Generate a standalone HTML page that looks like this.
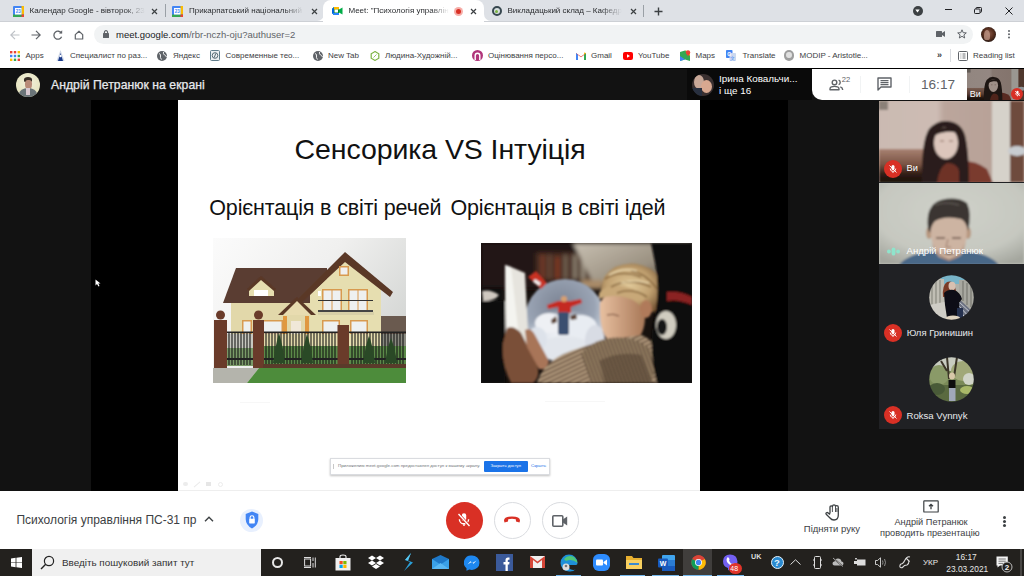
<!DOCTYPE html>
<html><head><meta charset="utf-8">
<style>
*{margin:0;padding:0;box-sizing:border-box}
html,body{width:1024px;height:576px;overflow:hidden;background:#121212;font-family:"Liberation Sans",sans-serif}
.a{position:absolute}
.t{position:absolute;white-space:nowrap;line-height:1}
.fade{overflow:hidden;-webkit-mask-image:linear-gradient(to right,#000 82%,transparent 100%)}
#tabs{left:0;top:0;width:1024px;height:21px;background:#dee1e6}
#tool{left:0;top:21px;width:1024px;height:24px;background:#fff}
#omni{left:94px;top:25px;width:879px;height:19px;border-radius:10px;background:#f1f3f4}
#bm{left:0;top:45px;width:1024px;height:23px;background:#fff}
#meet{left:0;top:68px;width:1024px;height:481px;background:#121212;border-top:1.5px solid #000}
#pres{left:91px;top:100px;width:697px;height:391px;background:#000}
#slide{left:178px;top:100px;width:522px;height:391px;background:#fff}
#tiles{left:879px;top:101px;width:145px;height:328px;background:#202124}
#hdrw{left:812px;top:69px;width:155px;height:31px;background:#fff;border-bottom-left-radius:10px}
#self{left:967px;top:68px;width:57px;height:32px;background:#8a7a70}
#bot{left:0;top:491px;width:1024px;height:58px;background:#fff}
#task{left:0;top:549px;width:1024px;height:27px;background:#23211e}
</style></head><body>

<!-- TAB BAR -->
<div class="a" id="tabs"></div>
<!-- tab1 -->
<svg class="a" style="left:13px;top:6px" width="11" height="11" viewBox="0 0 11 11"><rect x="0" y="0" width="11" height="11" rx="1" fill="#4285f4"/><rect x="0" y="8.5" width="11" height="2.5" fill="#34a853"/><rect x="8.5" y="0" width="2.5" height="8.5" fill="#fbbc04"/><rect x="8.5" y="8.5" width="2.5" height="2.5" fill="#ea4335"/><rect x="2" y="2" width="6.5" height="6.5" fill="#fff"/><text x="5.2" y="7.3" font-size="4.5" font-family="Liberation Sans" fill="#4285f4" text-anchor="middle" font-weight="bold">23</text></svg>
<div class="t fade" style="left:29.5px;top:6.5px;font-size:8px;color:#2a2c2f;width:115px">Календар Google - вівторок, 23</div>
<svg class="a" style="left:151px;top:8px" width="7" height="7" viewBox="0 0 7 7"><path d="M1 1L6 6M6 1L1 6" stroke="#3c4043" stroke-width="1.2"/></svg>
<div class="a" style="left:165px;top:4px;width:1px;height:13px;background:#9aa0a6"></div>
<!-- tab2 -->
<svg class="a" style="left:171.5px;top:6px" width="11" height="11" viewBox="0 0 11 11"><rect x="0" y="0" width="11" height="11" rx="1" fill="#4285f4"/><rect x="0" y="8.5" width="11" height="2.5" fill="#34a853"/><rect x="8.5" y="0" width="2.5" height="8.5" fill="#fbbc04"/><rect x="8.5" y="8.5" width="2.5" height="2.5" fill="#ea4335"/><rect x="2" y="2" width="6.5" height="6.5" fill="#fff"/><text x="5.2" y="7.3" font-size="4.5" font-family="Liberation Sans" fill="#4285f4" text-anchor="middle" font-weight="bold">23</text></svg>
<div class="t fade" style="left:189px;top:6.5px;font-size:8px;color:#2a2c2f;width:115px">Прикарпатський національний</div>
<div class="a" style="left:316px;top:12px;width:10px;height:10px;background:#fff"></div>
<div class="a" style="left:305px;top:0;width:18.5px;height:21.3px;background:#dee1e6;border-bottom-right-radius:7px"></div>
<svg class="a" style="left:310.5px;top:8px" width="7" height="7" viewBox="0 0 7 7"><path d="M1 1L6 6M6 1L1 6" stroke="#3c4043" stroke-width="1.2"/></svg>
<!-- active tab -->
<div class="a" style="left:323px;top:0px;width:161px;height:22px;background:#fff;border-radius:8px 8px 0 0"></div>
<svg class="a" style="left:332px;top:7px" width="11" height="8" viewBox="0 0 11 8"><path d="M0 2L2 0H7V8H2L0 6Z" fill="#00832d"/><path d="M0 2L2 0V8L0 6Z" fill="#0066da"/><path d="M2 0H7V2.5H2Z" fill="#ffba00"/><path d="M0 6H7V8H2Z" fill="#2684fc"/><rect x="2.5" y="2.5" width="3.5" height="3" fill="#fff"/><path d="M7 2.5L10.5 0.5V7.5L7 5.5Z" fill="#00ac47"/></svg>
<div class="t fade" style="left:348.5px;top:6.5px;font-size:8px;color:#2a2c2f;width:100px">Meet: "Психологія управління ПС-31</div>
<div class="a" style="left:454px;top:6.5px;width:9px;height:9px;border-radius:50%;background:#f6aea9"></div>
<div class="a" style="left:456px;top:8.5px;width:5px;height:5px;border-radius:50%;background:#d93025"></div>
<svg class="a" style="left:470px;top:8px" width="7" height="7" viewBox="0 0 7 7"><path d="M1 1L6 6M6 1L1 6" stroke="#3c4043" stroke-width="1.2"/></svg>
<!-- tab4 -->
<div class="a" style="left:481px;top:12px;width:10px;height:10px;background:#fff"></div>
<div class="a" style="left:483.5px;top:0;width:20px;height:21.3px;background:#dee1e6;border-bottom-left-radius:7px"></div>
<div class="a" style="left:491.5px;top:5.8px;width:10.5px;height:10.5px;border-radius:50%;border:2px solid #37474f;background:#d8e0e0"></div>
<div class="a" style="left:495.2px;top:9.5px;width:3px;height:3px;border-radius:50%;background:#7cb342"></div>
<div class="t fade" style="left:507.5px;top:6.5px;font-size:8px;color:#2a2c2f;width:114px">Викладацький склад – Кафедра</div>
<svg class="a" style="left:629.5px;top:8px" width="7" height="7" viewBox="0 0 7 7"><path d="M1 1L6 6M6 1L1 6" stroke="#3c4043" stroke-width="1.2"/></svg>
<div class="a" style="left:642.5px;top:5px;width:1px;height:12px;background:#9aa0a6"></div>
<svg class="a" style="left:653.5px;top:6.5px" width="9" height="9" viewBox="0 0 9 9"><path d="M4.5 0.5V8.5M0.5 4.5H8.5" stroke="#3c4043" stroke-width="1.4"/></svg>
<!-- window controls -->
<div class="a" style="left:912.5px;top:5.5px;width:10px;height:10px;border-radius:50%;background:#3c4043"></div>
<svg class="a" style="left:915px;top:8.5px" width="5" height="4" viewBox="0 0 5 4"><path d="M0.3 0.5H4.7L2.5 3.5Z" fill="#fff"/></svg>
<div class="a" style="left:944.5px;top:9px;width:7px;height:1px;background:#202124"></div>
<svg class="a" style="left:974px;top:6.5px" width="8" height="7" viewBox="0 0 8 7"><rect x="0.5" y="2" width="5.5" height="4.5" rx="0.8" fill="none" stroke="#202124" stroke-width="1"/><path d="M2 2V1.3Q2 0.5 2.8 0.5H6.7Q7.5 0.5 7.5 1.3V4.5Q7.5 5.3 6.7 5.3H6" fill="none" stroke="#202124" stroke-width="1"/></svg>
<svg class="a" style="left:1004.5px;top:6.5px" width="8" height="8" viewBox="0 0 8 8"><path d="M0.5 0.5L7.5 7.5M7.5 0.5L0.5 7.5" stroke="#202124" stroke-width="1"/></svg>

<!-- TOOLBAR -->
<div class="a" id="tool"></div>
<div class="a" style="left:0;top:20.5px;width:323px;height:1px;background:#cdd0d5"></div>
<div class="a" style="left:484px;top:20.5px;width:540px;height:1px;background:#cdd0d5"></div>
<svg class="a" style="left:10px;top:30px" width="10" height="10" viewBox="0 0 10 10"><path d="M9.5 5H1M5 0.8L0.8 5L5 9.2" fill="none" stroke="#bdc1c6" stroke-width="1.2"/></svg>
<svg class="a" style="left:31px;top:30px" width="10" height="10" viewBox="0 0 10 10"><path d="M0.5 5H9M5 0.8L9.2 5L5 9.2" fill="none" stroke="#5f6368" stroke-width="1.2"/></svg>
<svg class="a" style="left:52.5px;top:29.5px" width="10" height="10" viewBox="0 0 10 10"><path d="M8.4 3.2A4 4 0 1 0 8.6 6.8" fill="none" stroke="#5f6368" stroke-width="1.3"/><path d="M6 3.4H9.2V0.3Z" fill="#5f6368"/></svg>
<svg class="a" style="left:73.5px;top:29.5px" width="10" height="10" viewBox="0 0 10 10"><path d="M1.3 4.6L5 1.2L8.7 4.6V9H1.3Z" fill="none" stroke="#5f6368" stroke-width="1.2" stroke-linejoin="round"/></svg>
<div class="a" id="omni"></div>
<svg class="a" style="left:102.5px;top:29.5px" width="6" height="8" viewBox="0 0 6 8"><rect x="0" y="3" width="6" height="5" rx="0.6" fill="#5f6368"/><path d="M1.4 3.4V2.2A1.6 1.6 0 0 1 4.6 2.2V3.4" fill="none" stroke="#5f6368" stroke-width="1.1"/></svg>
<div class="t" style="left:116px;top:29.5px;font-size:9.5px;color:#5f6368"><span style="color:#202124">meet.google.com</span>/rbr-nczh-oju?authuser=2</div>
<svg class="a" style="left:936px;top:31px" width="9" height="6" viewBox="0 0 9 6"><rect x="0" y="0" width="6" height="6" rx="0.5" fill="#5f6368"/><path d="M6 2L9 0V6L6 4Z" fill="#5f6368"/></svg>
<svg class="a" style="left:956.5px;top:29px" width="10" height="10" viewBox="0 0 10 10"><path d="M5 0.8L6.2 3.7L9.3 3.9L6.9 5.9L7.7 9L5 7.3L2.3 9L3.1 5.9L0.7 3.9L3.8 3.7Z" fill="none" stroke="#5f6368" stroke-width="1" stroke-linejoin="round"/></svg>
<div class="a" style="left:980.5px;top:27px;width:15px;height:15px;border-radius:50%;background:radial-gradient(circle at 50% 45%,#8a5a4a 0%,#5a3020 45%,#2a1a14 75%)"></div>
<div class="a" style="left:984px;top:30px;width:6px;height:10px;border-radius:50% 50% 30% 30%;background:#c8a090;opacity:.7"></div>
<div class="a" style="left:1007.5px;top:30px;width:2.4px;height:2.4px;border-radius:50%;background:#5f6368;box-shadow:0 3.3px 0 #5f6368,0 6.6px 0 #5f6368"></div>

<!-- BOOKMARKS -->
<div class="a" id="bm"></div>
<svg class="a" style="left:10px;top:51px" width="10" height="10" viewBox="0 0 10 10">
<rect x="0" y="0" width="2.4" height="2.4" fill="#ea4335"/><rect x="3.8" y="0" width="2.4" height="2.4" fill="#ea4335"/><rect x="7.6" y="0" width="2.4" height="2.4" fill="#fbbc04"/>
<rect x="0" y="3.8" width="2.4" height="2.4" fill="#4285f4"/><rect x="3.8" y="3.8" width="2.4" height="2.4" fill="#4285f4"/><rect x="7.6" y="3.8" width="2.4" height="2.4" fill="#34a853"/>
<rect x="0" y="7.6" width="2.4" height="2.4" fill="#fbbc04"/><rect x="3.8" y="7.6" width="2.4" height="2.4" fill="#34a853"/><rect x="7.6" y="7.6" width="2.4" height="2.4" fill="#ea4335"/></svg>
<div class="t" style="left:25.5px;top:52px;font-size:8px;color:#3c4043">Apps</div>
<svg class="a" style="left:55.5px;top:50px" width="9" height="11" viewBox="0 0 9 11"><path d="M4.5 0L8.5 11H0.5Z" fill="#cfd8e8"/><path d="M4.5 3L7 11H2Z" fill="#1a3a8a"/><circle cx="4.5" cy="6" r="1.2" fill="#fff"/></svg>
<div class="t" style="left:70px;top:52px;font-size:8px;color:#3c4043">Специалист по раз...</div>
<svg class="a" style="left:157px;top:50.5px" width="10" height="10" viewBox="0 0 10 10"><circle cx="5" cy="5" r="5" fill="#5f6368"/><path d="M2 2.5Q4 3 3.5 5Q3 6.5 4.5 8.5M6.5 1Q6 3 7.5 4Q9 4.5 9.5 6" fill="none" stroke="#fff" stroke-width="0.9"/></svg>
<div class="t" style="left:173px;top:52px;font-size:8px;color:#3c4043">Яндекс</div>
<svg class="a" style="left:209.5px;top:50px" width="10" height="11" viewBox="0 0 10 11"><rect x="0.5" y="0.5" width="9" height="10" rx="1" fill="#eceff1" stroke="#607d8b" stroke-width="1"/><circle cx="5" cy="5.5" r="2.8" fill="none" stroke="#455a64" stroke-width="0.9"/><path d="M5.8 3.5L4.2 7.5" stroke="#455a64" stroke-width="0.9"/></svg>
<div class="t" style="left:225.5px;top:52px;font-size:8px;color:#3c4043">Современные тео...</div>
<svg class="a" style="left:313px;top:50.5px" width="10" height="10" viewBox="0 0 10 10"><circle cx="5" cy="5" r="5" fill="#5f6368"/><path d="M2 2.5Q4 3 3.5 5Q3 6.5 4.5 8.5M6.5 1Q6 3 7.5 4Q9 4.5 9.5 6" fill="none" stroke="#fff" stroke-width="0.9"/></svg>
<div class="t" style="left:328px;top:52px;font-size:8px;color:#3c4043">New Tab</div>
<svg class="a" style="left:369.5px;top:50.5px" width="10" height="10" viewBox="0 0 10 10"><path d="M5 0.6L8.8 2.8V7.2L5 9.4L1.2 7.2V2.8Z" fill="none" stroke="#7cb342" stroke-width="1.2"/><path d="M3.5 6.5L6.5 3.5" stroke="#7cb342" stroke-width="0.8"/></svg>
<div class="t" style="left:385px;top:52px;font-size:8px;color:#3c4043">Людина-Художній...</div>
<svg class="a" style="left:471.5px;top:50px" width="11" height="11" viewBox="0 0 11 11"><circle cx="5.5" cy="5.5" r="5.5" fill="#b0357a"/><path d="M3.2 10V5.5A2.3 2.3 0 0 1 7.8 5.5V10" fill="none" stroke="#fff" stroke-width="1.4"/></svg>
<div class="t" style="left:488px;top:52px;font-size:8px;color:#3c4043">Оцінювання персо...</div>
<svg class="a" style="left:575.5px;top:51.5px" width="10" height="8" viewBox="0 0 10 8"><path d="M0 1V8H2V3L5 5.2L8 3V8H10V1L5 4.6Z" fill="#ea4335"/><path d="M0 1V8H2V3Z" fill="#4285f4"/><path d="M8 3V8H10V1Z" fill="#34a853"/><path d="M10 1L8 2.5V0.5Z" fill="#fbbc04"/></svg>
<div class="t" style="left:591px;top:52px;font-size:8px;color:#3c4043">Gmail</div>
<svg class="a" style="left:622.5px;top:51.5px" width="10" height="8" viewBox="0 0 10 8"><rect x="0" y="0" width="10" height="8" rx="2" fill="#ff0000"/><path d="M4 2.2L7 4L4 5.8Z" fill="#fff"/></svg>
<div class="t" style="left:638px;top:52px;font-size:8px;color:#3c4043">YouTube</div>
<svg class="a" style="left:679.5px;top:50px" width="11" height="11" viewBox="0 0 11 11"><path d="M0 2L5 0.5L10 2V11L5 9.5L0 11Z" fill="#34a853"/><path d="M0 6L5 9.5L0 11Z" fill="#4285f4"/><path d="M5 0.5L10 2V6Z" fill="#fbbc04"/><circle cx="8" cy="2.5" r="2.2" fill="#ea4335"/><path d="M6.5 3.5L8 6.5L9.5 3.5Z" fill="#ea4335"/></svg>
<div class="t" style="left:695.5px;top:52px;font-size:8px;color:#3c4043">Maps</div>
<svg class="a" style="left:726px;top:50px" width="10" height="11" viewBox="0 0 10 11"><rect x="0" y="0" width="6.5" height="8" rx="0.8" fill="#4285f4"/><rect x="3.5" y="3" width="6.5" height="8" rx="0.8" fill="#cbd8f0"/><text x="3.2" y="6" font-size="5" fill="#fff" text-anchor="middle" font-family="Liberation Sans" font-weight="bold">G</text><text x="6.8" y="9.5" font-size="4.5" fill="#4285f4" text-anchor="middle" font-family="Liberation Sans">文</text></svg>
<div class="t" style="left:742.5px;top:52px;font-size:8px;color:#3c4043">Translate</div>
<div class="a" style="left:783.8px;top:50px;width:10.5px;height:10.5px;border-radius:50%;background:#9e9e9e"></div>
<div class="a" style="left:786.3px;top:51.5px;width:5.5px;height:6px;border-radius:50%;background:#e0e0e0"></div>
<div class="t" style="left:799.5px;top:52px;font-size:8px;color:#3c4043">MODIP - Aristotle...</div>
<div class="t" style="left:937px;top:51px;font-size:9px;color:#3c4043;font-weight:bold">»</div>
<div class="a" style="left:950px;top:49px;width:1px;height:13px;background:#dadce0"></div>
<svg class="a" style="left:957.5px;top:50.5px" width="10" height="10" viewBox="0 0 10 10"><rect x="0.5" y="0.5" width="9" height="9" rx="1" fill="none" stroke="#5f6368" stroke-width="1"/><path d="M2.5 3H3.3M4.5 3H7.5M2.5 5H3.3M4.5 5H7.5M2.5 7H3.3M4.5 7H7.5" stroke="#5f6368" stroke-width="0.9"/></svg>
<div class="t" style="left:973px;top:52px;font-size:8px;color:#3c4043">Reading list</div>
<div class="a" id="meet"></div>
<!-- header left -->
<div class="a" style="left:16px;top:72.5px;width:24px;height:24px;border-radius:50%;background:radial-gradient(circle at 50% 40%,#f2f0dc 0%,#e8e6c4 60%,#d8d8b0 100%);overflow:hidden">
<div class="a" style="left:8px;top:4px;width:8px;height:5px;border-radius:50% 50% 20% 20%;background:#3a3028"></div>
<div class="a" style="left:8.5px;top:7px;width:7px;height:9px;border-radius:40% 40% 50% 50%;background:#b88a78"></div>
<div class="a" style="left:3px;top:15.5px;width:18px;height:12px;border-radius:50% 50% 0 0;background:#6a7478"></div>
<div class="a" style="left:10px;top:15px;width:4px;height:7px;background:#d8c8d0"></div>
</div>
<div class="t" style="left:51px;top:78.5px;font-size:12.2px;color:#e8eaed;letter-spacing:0.05px;-webkit-text-stroke:0.25px #e8eaed">Андрій Петранюк на екрані</div>
<!-- header right: participant -->
<div class="a" style="left:687px;top:69px;width:125px;height:31px;background:#0a0a0a"></div>
<div class="a" style="left:692px;top:73.5px;width:22px;height:22px;border-radius:50%;overflow:hidden;background:#3a3030">
<div class="a" style="left:2px;top:1px;width:10px;height:14px;border-radius:50%;background:#c8a898"></div>
<div class="a" style="left:9px;top:6px;width:11px;height:13px;border-radius:50%;background:#d8a890"></div>
<div class="a" style="left:0px;top:14px;width:10px;height:10px;background:#283040"></div>
</div>
<div class="t" style="left:719px;top:74px;font-size:9.9px;color:#fff">Ірина Ковальчи...</div>
<div class="t" style="left:719px;top:86.4px;font-size:9.9px;color:#fff">і ще 16</div>
<div class="a" id="pres"></div>
<div class="a" id="slide"></div>
<div class="t" style="left:294.5px;top:135px;font-size:28.5px;color:#111;letter-spacing:-0.08px">Сенсорика VS Інтуіція</div>
<div class="t" style="left:209.3px;top:198px;font-size:21.5px;color:#111;letter-spacing:-0.16px">Орієнтація в світі речей</div>
<div class="t" style="left:450.5px;top:198px;font-size:21.5px;color:#111;letter-spacing:-0.17px">Орієнтація в світі ідей</div>
<!-- house photo -->
<svg class="a" style="left:213px;top:238px" width="193" height="145" viewBox="0 0 193 145">
<defs><linearGradient id="sky" x1="0" y1="0" x2="1" y2="0.6"><stop offset="0" stop-color="#fbfbfb"/><stop offset="0.5" stop-color="#f0f0ef"/><stop offset="1" stop-color="#d4d6d4"/></linearGradient>
<filter id="bl"><feGaussianBlur stdDeviation="0.5"/></filter></defs>
<rect width="193" height="145" fill="url(#sky)"/>
<g filter="url(#bl)">
<rect x="165" y="78" width="28" height="20" fill="#6a5a50"/>
<polygon points="23,30 114,30 114,65 10,65" fill="#5a3c30"/>
<rect x="18" y="65" width="80" height="50" fill="#e2d8aa"/>
<polygon points="97,57 132,23 168,51 168,112 97,112" fill="#e6deb0"/>
<polygon points="84,62 132,14 180,54 177,59 132,24 89,64" fill="#5a3828"/>
<polygon points="36,50 48,40 61,50 61,58 36,58" fill="#e6deb0"/>
<polygon points="34,51 48,38 63,51 61,53 48,42 36,53" fill="#5a3828"/>
<rect x="41" y="52" width="14" height="6" fill="#fff"/>
<rect x="105" y="53" width="3" height="5" fill="#fff"/>
<rect x="126" y="28" width="10" height="10" fill="#d89a50"/><rect x="127.5" y="29.5" width="7" height="7" fill="#f0f0f0"/>
<rect x="109" y="51" width="20" height="23" fill="#d89a50"/><rect x="110.5" y="52.5" width="17" height="20" fill="#eef0f0"/><rect x="118.5" y="52" width="1" height="21" fill="#d89a50"/>
<rect x="135" y="51" width="20" height="23" fill="#d89a50"/><rect x="136.5" y="52.5" width="17" height="20" fill="#eef0f0"/><rect x="144.5" y="52" width="1" height="21" fill="#d89a50"/>
<rect x="105" y="62" width="55" height="1" fill="#333"/><rect x="105" y="72" width="55" height="2" fill="#444"/>
<rect x="105" y="74" width="56" height="3" fill="#d8d0a8"/>
<polygon points="65,77 84,59 103,77" fill="#5a3828"/>
<polygon points="70,77 84,63 98,77" fill="#e8dcb0"/>
<rect x="70" y="78" width="4" height="18" fill="#e09840"/><rect x="92" y="78" width="4" height="18" fill="#e09840"/>
<rect x="78" y="83" width="10" height="13" fill="#f0e8d8"/>
<rect x="109" y="82" width="18" height="14" fill="#d89a50"/><rect x="110.5" y="83.5" width="15" height="12" fill="#eef0f0"/>
<rect x="137" y="82" width="18" height="14" fill="#d89a50"/><rect x="138.5" y="83.5" width="15" height="12" fill="#eef0f0"/>
<rect x="29" y="82" width="10" height="14" fill="#d89a50"/><rect x="30.5" y="83.5" width="7" height="12" fill="#eef0f0"/>
<rect x="48" y="82" width="22" height="14" fill="#d89a50"/><rect x="49.5" y="83.5" width="19" height="12" fill="#eef0f0"/>
<rect x="14" y="96" width="26" height="32" fill="#c8c8c0"/><rect x="168" y="96" width="25" height="16" fill="#8a8a80"/><rect x="50" y="108" width="143" height="20" fill="#5c8a48"/><rect x="14" y="110" width="26" height="18" fill="#7a9a68"/>
</g>
<g stroke="#101010" stroke-width="1.05">
<path d="M16 94V127M19 94V127M22 94V127M25 94V127M28 94V127M31 94V127M34 94V127M37 94V127M53 94V127M56 94V127M59 94V127M62 94V127M65 94V127M68 94V127M71 94V127M74 94V127M77 94V127M80 94V127M83 94V127M86 94V127M89 94V127M92 94V127M95 94V127M98 94V127M101 94V127M104 94V127M107 94V127M110 94V127M113 94V127M116 94V127M119 94V127M122 94V127M139 94V127M142 94V127M145 94V127M148 94V127M151 94V127M154 94V127M157 94V127M160 94V127M163 94V127M166 94V127M169 94V127M172 94V127M175 94V127M178 94V127M181 94V127M184 94V127M187 94V127M190 94V127"/>
</g>
<rect x="14" y="93.5" width="179" height="1.6" fill="#222"/>
<rect x="14" y="120" width="179" height="2" fill="#222"/>
<g filter="url(#bl)">
<path d="M60 125Q63 105 66 95Q70 108 72 125Z" fill="#2a4a28"/>
<path d="M88 125Q91 105 94 96Q98 108 100 125Z" fill="#2a4a28"/>
<path d="M150 125Q153 105 156 98Q160 108 162 125Z" fill="#2a4a28"/>
<path d="M172 125Q175 108 178 100Q182 110 184 125Z" fill="#2a4a28"/>
<rect x="1" y="82" width="13" height="48" fill="#6a3a2a"/><circle cx="7.5" cy="77" r="4.5" fill="#6a3a2a"/>
<rect x="40" y="82" width="11" height="48" fill="#6a3a2a"/><circle cx="45.5" cy="77" r="4.5" fill="#6a3a2a"/>
<rect x="124.5" y="87" width="11.5" height="43" fill="#6a3a2a"/>
<rect x="50" y="126" width="143" height="4" fill="#5a3a2a"/>
<polygon points="0,130 46,130 34,145 0,145" fill="#b4b4ac"/>
<polygon points="46,130 193,130 193,145 34,145" fill="#4e8c3a"/>
</g>
</svg>
<!-- child photo -->
<svg class="a" style="left:481px;top:243px" width="211" height="140" viewBox="0 0 211 140">
<defs>
<filter id="b2" x="-20%" y="-20%" width="140%" height="140%"><feGaussianBlur stdDeviation="2.2"/></filter>
<filter id="b1" x="-20%" y="-20%" width="140%" height="140%"><feGaussianBlur stdDeviation="0.8"/></filter>
<radialGradient id="glob" cx="0.45" cy="0.35" r="0.6"><stop offset="0" stop-color="#7a8292"/><stop offset="0.7" stop-color="#9aa4b4"/><stop offset="1" stop-color="#d0d8e2"/></radialGradient>
<radialGradient id="cloud" cx="0.5" cy="0.5" r="0.5"><stop offset="0" stop-color="#f2f4f8"/><stop offset="0.7" stop-color="#dfe4ec"/><stop offset="1" stop-color="#b8c0cc" stop-opacity="0"/></radialGradient>
<linearGradient id="ray" x1="0" y1="0" x2="1" y2="0.8"><stop offset="0" stop-color="#c8c0b2"/><stop offset="0.6" stop-color="#9a9080"/><stop offset="1" stop-color="#3a3028"/></linearGradient>
<radialGradient id="hair" cx="0.45" cy="0.45" r="0.6"><stop offset="0" stop-color="#e0c898"/><stop offset="0.6" stop-color="#c0a070"/><stop offset="1" stop-color="#7a5a38"/></radialGradient>
<linearGradient id="face" x1="0" y1="0" x2="1" y2="0"><stop offset="0" stop-color="#e8c0a0"/><stop offset="1" stop-color="#a87858"/></linearGradient>
<pattern id="stripe" width="4" height="4" patternUnits="userSpaceOnUse" patternTransform="rotate(-25)"><rect width="4" height="4" fill="#6e5846"/><rect width="4" height="1.8" fill="#c0a888"/></pattern>
<pattern id="stripe2" width="3.5" height="3.5" patternUnits="userSpaceOnUse" patternTransform="rotate(70)"><rect width="3.5" height="3.5" fill="#5e4c3c"/><rect width="3.5" height="1.5" fill="#a89070"/></pattern>
</defs>
<rect width="211" height="140" fill="#17110e"/>
<g filter="url(#b2)">
<rect x="0" y="0" width="120" height="46" fill="#221812"/>
<rect x="55" y="10" width="58" height="27" fill="#4a2e22"/>
<rect x="60" y="12" width="3" height="24" fill="#7a3a2a"/><rect x="67" y="12" width="3" height="24" fill="#6a4a3a"/><rect x="75" y="14" width="3" height="22" fill="#8a3a28"/><rect x="83" y="12" width="3" height="24" fill="#7a6a5a"/><rect x="92" y="12" width="4" height="24" fill="#8a8070"/><rect x="100" y="12" width="4" height="24" fill="#9a9080"/>
<polygon points="92,0 211,0 200,30 150,48 112,40" fill="url(#ray)"/>
<rect x="100" y="37" width="22" height="9" fill="#a88a68"/>
<rect x="0" y="44" width="22" height="96" fill="#0e0a08"/>
</g>
<g filter="url(#b1)">
<circle cx="84" cy="76" r="40" fill="url(#glob)"/>
<ellipse cx="84" cy="94" rx="40" ry="28" fill="url(#cloud)"/>
<ellipse cx="68" cy="80" rx="14" ry="10" fill="#eef0f4"/>
<ellipse cx="100" cy="84" rx="16" ry="12" fill="#e8ecf2"/>
<ellipse cx="84" cy="106" rx="26" ry="13" fill="#e2e6ec"/>
<ellipse cx="114" cy="98" rx="10" ry="16" fill="#d8dce4"/>
<ellipse cx="56" cy="96" rx="10" ry="12" fill="#dde2ea"/>
<path d="M1 48Q10 46 18 52Q14 58 2 58Z" fill="#cfc8c0"/>
<path d="M47 34L55 28L66 40L60 46Z" fill="#c83024"/><path d="M54 36L60 40L58 43L52 39Z" fill="#f0f0f0"/>
<path d="M66 62L77 58H90L100 56L101 60L90 64V70H77V64L67 66Z" fill="#c42a20"/>
<circle cx="83" cy="56" r="3" fill="#d8a070"/>
<rect x="77" y="69" width="11" height="23" rx="2" fill="#3a5070"/>
<path d="M70 77L75 73L76 79L71 81Z" fill="#5a4030"/><path d="M89 73L95 71L96 76L90 77Z" fill="#5a4030"/>
<path d="M24 22L30 24L44 30L48 110L40 112L25 105Z" fill="#e6e4de"/>
<path d="M24 22L30 24L40 112L25 105Z" fill="#f4f4f0"/>
<path d="M0 58H24V140H0Z" fill="#0c0908"/>
<path d="M26 85Q33 82 40 90L56 122Q60 134 52 140H30Q20 120 22 100Z" fill="#7a5038"/>
<path d="M44 87Q50 84 54 92L68 118Q66 128 58 126L46 104Z" fill="#a87458"/>
<path d="M120 52Q118 34 134 24Q152 16 170 26Q184 36 182 58Q178 70 166 70Q146 60 120 52Z" fill="url(#hair)"/>
<path d="M119 60Q122 50 138 52Q160 56 164 74Q164 92 152 100Q136 104 126 96Q118 86 119 60Z" fill="url(#face)"/>
<path d="M118 50Q126 40 146 44Q158 46 164 58L150 56Q132 50 118 56Z" fill="#c8a878"/>
<path d="M124 36Q140 26 160 34M130 44Q148 34 170 44M150 28Q165 30 176 46M136 50Q152 44 166 54" stroke="#8a6a40" stroke-width="1.6" fill="none"/><path d="M128 32Q142 24 156 28M140 40Q156 36 168 40" stroke="#f0e0b8" stroke-width="1.2" fill="none"/><ellipse cx="165" cy="66" rx="6" ry="9" fill="#b07a5a"/><path d="M126 72Q132 70 138 73" stroke="#6a4030" stroke-width="1" fill="none"/>
<path d="M56 140Q62 118 90 108Q118 98 132 96L160 92Q178 96 182 140Z" fill="url(#stripe)"/>
<path d="M100 110Q120 90 150 96Q170 100 176 120L170 140H110Z" fill="url(#stripe2)"/>
<path d="M118 118Q138 108 160 112L172 140H124Z" fill="#4a3a2c" opacity="0.45"/>
<path d="M170 0H211V140H176Q168 110 172 80Q180 50 174 20Z" fill="#0e0b0a"/>
<path d="M186 49Q200 48 211 54V62Q198 56 186 58Z" fill="#8a2420"/>
<ellipse cx="185" cy="82" rx="10" ry="14" fill="#d0ccc0"/>
<ellipse cx="181" cy="84" rx="5" ry="8" fill="#141414"/>
</g>
</svg>
<!-- faint captions -->
<div class="a" style="left:240px;top:402px;width:30px;height:1px;background:#f7f7f7"></div>
<div class="a" style="left:545px;top:401px;width:60px;height:1px;background:#f7f7f7"></div>
<!-- share notification -->
<div class="a" style="left:329.5px;top:458px;width:220px;height:16.5px;background:#fff;border:1px solid #dadce0;box-shadow:0 1px 2px rgba(0,0,0,.25)"></div>
<div class="a" style="left:333px;top:463.5px;width:1.2px;height:5px;background:#c8c8c8"></div>
<div class="t" style="left:338px;top:463.8px;font-size:4.4px;color:#707478">Приложению meet.google.com предоставлен доступ к вашему экрану.</div>
<div class="a" style="left:483.5px;top:460.5px;width:44px;height:11px;background:#1a73e8;border-radius:1px"></div>
<div class="t" style="left:490.5px;top:464px;font-size:4.2px;color:#fff">Закрыть доступ</div>
<div class="t" style="left:531px;top:464px;font-size:4.4px;color:#1a73e8">Скрыть</div>
<!-- slide toolbar faint -->
<div class="a" style="left:183px;top:482px;width:5px;height:4px;border-radius:2px;background:#ececec"></div>
<div class="a" style="left:193px;top:484px;width:8px;height:1px;background:#eaeaea;transform:rotate(-40deg)"></div>
<div class="a" style="left:206px;top:482px;width:5px;height:4px;background:#e6e6e6"></div>
<div class="a" style="left:218px;top:482px;width:5px;height:5px;border-radius:50%;border:1px solid #ececec"></div>
<div class="a" style="left:178px;top:489.5px;width:522px;height:1px;background:#eeeeee"></div>
<!-- cursor -->
<svg class="a" style="left:95px;top:279px" width="6" height="8" viewBox="0 0 6 8"><path d="M0.5 0.5V6.5L2 5L3.5 7.5L4.5 7L3.3 4.6H5.5Z" fill="#fff"/></svg>
<div class="a" id="tiles"></div>
<div class="a" id="hdrw"></div>
<svg class="a" style="left:828.5px;top:78.5px" width="15" height="12" viewBox="0 0 15 12"><circle cx="5.5" cy="3.4" r="2.3" fill="none" stroke="#5f6368" stroke-width="1.4"/><path d="M1 10.8V10Q1 7.4 5.5 7.4Q10 7.4 10 10V10.8Z" fill="none" stroke="#5f6368" stroke-width="1.4" stroke-linejoin="round"/><path d="M9.6 1.2A2.3 2.3 0 0 1 9.6 5.6" fill="none" stroke="#5f6368" stroke-width="1.4"/><path d="M11.3 7.8Q13.6 8.6 13.6 10.4V11" fill="none" stroke="#5f6368" stroke-width="1.4"/></svg>
<div class="t" style="left:841.8px;top:76.3px;font-size:7.6px;color:#5f6368">22</div>
<div class="a" style="left:860px;top:76px;width:1px;height:17px;background:#f1f3f4"></div>
<svg class="a" style="left:877px;top:77px" width="15" height="14" viewBox="0 0 15 14"><path d="M1 1H14V10H4L1 13Z" fill="none" stroke="#5f6368" stroke-width="1.4" stroke-linejoin="round"/><path d="M3.5 3.6H11.5M3.5 5.6H11.5M3.5 7.6H11.5" stroke="#5f6368" stroke-width="1.3"/></svg>
<div class="a" style="left:909px;top:76px;width:1px;height:17px;background:#f1f3f4"></div>
<div class="t" style="left:921px;top:78.3px;font-size:13.6px;color:#5f6368">16:17</div>
<!-- self view -->
<div class="a" style="left:967px;top:69px;width:57px;height:31px;overflow:hidden;background:#c4b2a8;filter:brightness(0.72)">
<svg class="a" style="left:0;top:0" width="57" height="32" viewBox="0 0 145 81" preserveAspectRatio="none"><g >
<rect width="145" height="81" fill="url(#wall1)"/>
<rect x="0" y="0" width="9" height="9" fill="#8a8078"/>
<rect x="0" y="48" width="48" height="34" fill="url(#couch)"/>
<rect x="113" y="0" width="18" height="81" fill="#d6d2ca"/>
<rect x="131" y="0" width="14" height="81" fill="#6e4c3e"/>
<ellipse cx="138" cy="50" rx="9" ry="5" fill="#c8ccd0"/>
<path d="M74 60Q96 58 108 68L114 82H70Z" fill="#7a3a2e"/>
<path d="M43 82Q42 40 50 28Q58 19 68 20Q82 21 86 34Q90 50 90 82Z" fill="#2a1e1a"/>
<ellipse cx="67" cy="42" rx="12" ry="16" fill="#dcc6bc"/>
<path d="M54 36Q58 25 70 26Q80 27 82 34Q76 30 67 31Q58 32 54 36Z" fill="#2a1e1a"/>
<path d="M58 82Q60 66 68 62Q78 62 80 70L80 82Z" fill="#6e3226"/>
<path d="M61 40H65M70 40H74" stroke="#8a6a60" stroke-width="1.2"/>
</g></svg>
</div>
<div class="t" style="left:969.8px;top:89.5px;font-size:9px;color:#fff">Ви</div>
<div class="a" style="left:1011px;top:87.5px;width:12px;height:12px;border-radius:50%;background:#d93025"></div>
<svg class="a" style="left:1013.5px;top:90px" width="7" height="7" viewBox="0 0 10 10"><path d="M3.5 4.5V2.5A1.5 1.5 0 0 1 6.5 2.5V4.5A1.5 1.5 0 0 1 3.5 4.5Z" fill="#fff"/><path d="M2.2 4.6A2.8 2.8 0 0 0 7.8 4.6M5 7.4V9M1.5 1.5L8.5 8.5" stroke="#fff" stroke-width="1.1" fill="none"/></svg>
<!-- tile 1: you -->
<div class="a" style="left:879px;top:101px;width:145px;height:81px;overflow:hidden;background:#c4b2a8">
<svg class="a" style="left:0;top:0" width="145" height="81" viewBox="0 0 145 81">
<defs><filter id="tb"><feGaussianBlur stdDeviation="1.2"/></filter>
<linearGradient id="couch" x1="0" y1="0" x2="0" y2="1"><stop offset="0" stop-color="#a88272"/><stop offset="0.45" stop-color="#7a5444"/><stop offset="0.75" stop-color="#2e1c14"/><stop offset="1" stop-color="#1a100c"/></linearGradient>
<linearGradient id="wall1" x1="0" y1="0" x2="1" y2="0"><stop offset="0" stop-color="#cbbab2"/><stop offset="0.4" stop-color="#cdbcb4"/><stop offset="0.45" stop-color="#bba69c"/><stop offset="0.78" stop-color="#b8a298"/></linearGradient></defs>
<g filter="url(#tb)">
<rect width="145" height="81" fill="url(#wall1)"/>
<rect x="0" y="0" width="9" height="9" fill="#8a8078"/>
<rect x="0" y="48" width="48" height="34" fill="url(#couch)"/>
<rect x="113" y="0" width="18" height="81" fill="#d6d2ca"/>
<rect x="131" y="0" width="14" height="81" fill="#6e4c3e"/>
<ellipse cx="138" cy="50" rx="9" ry="5" fill="#c8ccd0"/>
<path d="M74 60Q96 58 108 68L114 82H70Z" fill="#7a3a2e"/>
<path d="M43 82Q42 40 50 28Q58 19 68 20Q82 21 86 34Q90 50 90 82Z" fill="#2a1e1a"/>
<ellipse cx="67" cy="42" rx="12" ry="16" fill="#dcc6bc"/>
<path d="M54 36Q58 25 70 26Q80 27 82 34Q76 30 67 31Q58 32 54 36Z" fill="#2a1e1a"/>
<path d="M58 82Q60 66 68 62Q78 62 80 70L80 82Z" fill="#6e3226"/>
<path d="M61 40H65M70 40H74" stroke="#8a6a60" stroke-width="1.2"/>
</g>
</svg>
</div>
<div class="a" style="left:884px;top:160px;width:18px;height:18px;border-radius:50%;background:#d93025"></div>
<svg class="a" style="left:888px;top:164px" width="10" height="10" viewBox="0 0 10 10"><path d="M3.5 4.5V2.5A1.5 1.5 0 0 1 6.5 2.5V4.5A1.5 1.5 0 0 1 3.5 4.5Z" fill="#fff"/><path d="M2.2 4.6A2.8 2.8 0 0 0 7.8 4.6M5 7.4V9M1.5 1.5L8.5 8.5" stroke="#fff" stroke-width="0.9" fill="none"/></svg>
<div class="t" style="left:906.5px;top:163.5px;font-size:9.2px;color:#fff">Ви</div>
<!-- tile 2: Andriy -->
<div class="a" style="left:879px;top:183px;width:145px;height:81px;overflow:hidden;background:#c8cac2">
<svg class="a" style="left:0;top:0" width="145" height="81" viewBox="0 0 145 81">
<defs><radialGradient id="bg2" cx="0.5" cy="0.35" r="0.75"><stop offset="0" stop-color="#cfd1c9"/><stop offset="0.7" stop-color="#c6c8c0"/><stop offset="1" stop-color="#a4a69e"/></radialGradient></defs>
<g filter="url(#tb)">
<rect width="145" height="81" fill="url(#bg2)"/>
<path d="M20 82Q30 70 55 68Q70 70 85 68Q110 70 120 82Z" fill="#4a6888"/>
<ellipse cx="50" cy="50" rx="3" ry="6" fill="#b89880"/><ellipse cx="89" cy="50" rx="3" ry="6" fill="#b89880"/>
<path d="M51 40Q51 30 70 30Q88 30 88 42Q88 65 82 72Q72 80 60 74Q52 66 51 40Z" fill="#cdb4a2"/>
<path d="M53 60Q58 72 70 76Q82 72 86 60Q84 74 70 78Q56 74 53 60Z" fill="#a88a78"/>
<path d="M49 46Q46 22 62 17Q78 13 88 20Q93 30 89 48Q87 38 82 36Q66 32 56 38Q52 42 51 50Z" fill="#3a3530"/>
<path d="M56 22Q66 18 80 22" stroke="#5a5450" stroke-width="1.5" fill="none"/>
<path d="M69 56L67 64H72" stroke="#9a7a68" stroke-width="1" fill="none"/>
<path d="M57 55H66M73 55H82" stroke="#6a5448" stroke-width="1.5"/>
<path d="M64 70Q70 73 76 70" stroke="#8a6a5a" stroke-width="1"/>
</g>
</svg>
</div>
<svg class="a" style="left:887px;top:246.5px" width="13" height="9" viewBox="0 0 13 9"><circle cx="1.9" cy="4.5" r="1.9" fill="#8fe4cc"/><rect x="4.6" y="0.5" width="3.8" height="8" rx="1.9" fill="#8fe4cc"/><circle cx="11.1" cy="4.5" r="1.9" fill="#8fe4cc"/></svg>
<div class="t" style="left:906.5px;top:246px;font-size:9.6px;color:#fff">Андрій Петранюк</div>
<!-- tile 3 -->
<svg class="a" style="left:929.3px;top:275.3px" width="45" height="45" viewBox="0 0 45 45">
<defs><clipPath id="c45"><circle cx="22.5" cy="22.5" r="22.3"/></clipPath><filter id="ab"><feGaussianBlur stdDeviation="0.7"/></filter></defs>
<g clip-path="url(#c45)"><g filter="url(#ab)">
<rect width="45" height="45" fill="#b0b0a8"/>
<rect x="12" y="0" width="24" height="9" fill="#78b4c8"/>
<rect x="0" y="4" width="15" height="30" fill="#c0beb4"/>
<path d="M3 8V30M7 6V30M11 5V28" stroke="#8a8a80" stroke-width="1.2"/>
<rect x="30" y="5" width="15" height="28" fill="#a8a8a0"/>
<path d="M34 6V26M38 8V30M42 10V32" stroke="#7a7a72" stroke-width="1.2"/>
<path d="M0 30L20 26L24 45H0Z" fill="#cfcdc6"/>
<path d="M28 22L45 38V45H30Z" fill="#6a7080"/>
<path d="M29 26L44 40M30 31L42 44M31 36L38 45" stroke="#c8ccd4" stroke-width="1"/>
<path d="M14 22Q13 10 18 7Q24 5 26 12L28 20Z" fill="#7a3a28"/>
<ellipse cx="23" cy="11" rx="3.5" ry="4.2" fill="#d8c0b0"/>
<path d="M15 18Q19 14 25 15Q31 17 33 24L30 28L31 42Q24 45 18 43L16 30Z" fill="#101012"/>
<rect x="28" y="33" width="6" height="12" fill="#283050"/>
<ellipse cx="24" cy="43" rx="7" ry="2.5" fill="#e0d4c0"/>
</g></g></svg>
<div class="a" style="left:884px;top:323.5px;width:18px;height:18px;border-radius:50%;background:#d93025"></div>
<svg class="a" style="left:888px;top:327.5px" width="10" height="10" viewBox="0 0 10 10"><path d="M3.5 4.5V2.5A1.5 1.5 0 0 1 6.5 2.5V4.5A1.5 1.5 0 0 1 3.5 4.5Z" fill="#fff"/><path d="M2.2 4.6A2.8 2.8 0 0 0 7.8 4.6M5 7.4V9M1.5 1.5L8.5 8.5" stroke="#fff" stroke-width="0.9" fill="none"/></svg>
<div class="t" style="left:906.7px;top:328px;font-size:9.5px;color:#e8eaed">Юля Гринишин</div>
<!-- tile 4 -->
<svg class="a" style="left:929.3px;top:357.3px" width="45" height="45" viewBox="0 0 45 45">
<g clip-path="url(#c45)"><g filter="url(#ab)">
<rect width="45" height="45" fill="#7a8a58"/>
<rect x="0" y="0" width="45" height="14" fill="#c8ccc0"/>
<ellipse cx="10" cy="18" rx="10" ry="10" fill="#8a9a68"/>
<ellipse cx="34" cy="14" rx="12" ry="10" fill="#a0a878"/>
<ellipse cx="40" cy="22" rx="6" ry="6" fill="#d0d4c8"/>
<path d="M18 0L20 22M28 0L25 20M12 4L18 14" stroke="#3a3428" stroke-width="2"/>
<rect x="0" y="28" width="45" height="17" fill="#5a6a40"/>
<ellipse cx="38" cy="33" rx="7" ry="4" fill="#a8b868"/>
<ellipse cx="8" cy="32" rx="8" ry="6" fill="#4a5a38"/>
<ellipse cx="23" cy="19" rx="3" ry="3.5" fill="#d8c8a8"/>
<rect x="19.5" y="23" width="7" height="8" fill="#111"/>
<rect x="20" y="31" width="6.5" height="13" fill="#a0a8b8"/>
</g></g></svg>
<div class="a" style="left:884px;top:406px;width:18px;height:18px;border-radius:50%;background:#d93025"></div>
<svg class="a" style="left:888px;top:410px" width="10" height="10" viewBox="0 0 10 10"><path d="M3.5 4.5V2.5A1.5 1.5 0 0 1 6.5 2.5V4.5A1.5 1.5 0 0 1 3.5 4.5Z" fill="#fff"/><path d="M2.2 4.6A2.8 2.8 0 0 0 7.8 4.6M5 7.4V9M1.5 1.5L8.5 8.5" stroke="#fff" stroke-width="0.9" fill="none"/></svg>
<div class="t" style="left:906.5px;top:410.5px;font-size:9.6px;color:#e8eaed">Roksa Vynnyk</div>
<div class="a" id="bot"></div>
<div class="t" style="left:16.4px;top:513.6px;font-size:12px;color:#3c4043">Психологія управління ПС-31 пр</div>
<svg class="a" style="left:204px;top:516px" width="10" height="6" viewBox="0 0 10 6"><path d="M1 5.2L5 1.2L9 5.2" fill="none" stroke="#3c4043" stroke-width="1.4"/></svg>
<div class="a" style="left:240px;top:508.5px;width:23px;height:23px;border-radius:50%;background:#e8f0fe"></div>
<svg class="a" style="left:244.5px;top:510.5px" width="14" height="18" viewBox="0 0 14 18"><path d="M7 0.5L13.3 3V8Q13.3 14 7 17.5Q0.7 14 0.7 8V3Z" fill="#4285f4"/><rect x="4.2" y="7.8" width="5.6" height="4.6" rx="0.6" fill="#fff"/><path d="M5.1 8V6.6A1.9 1.9 0 0 1 8.9 6.6V8" fill="none" stroke="#fff" stroke-width="1.1"/></svg>
<!-- mic off -->
<div class="a" style="left:445.5px;top:502px;width:37px;height:37px;border-radius:50%;background:#d93025"></div>
<svg class="a" style="left:455px;top:511px" width="18" height="18" viewBox="0 0 18 18"><path d="M6.8 8V4.5A2.2 2.2 0 0 1 11.2 4.5V8A2.2 2.2 0 0 1 6.8 8Z" fill="#fff"/><path d="M4.4 8.2A4.6 4.6 0 0 0 13.6 8.2M9 12.8V15" fill="none" stroke="#fff" stroke-width="1.4"/><path d="M3.5 3L14.5 15" stroke="#d93025" stroke-width="2.6"/><path d="M3.5 3L14.5 15" stroke="#fff" stroke-width="1.4"/></svg>
<!-- hangup -->
<div class="a" style="left:493.5px;top:502px;width:37px;height:37px;border-radius:50%;border:1px solid #dadce0;background:#fff"></div>
<svg class="a" style="left:503px;top:515px" width="18" height="9" viewBox="0 0 18 9"><path d="M1 5.5Q1 1.5 9 1.5Q17 1.5 17 5.5L16.5 7.5L13 6.5L12.8 4.3Q9 3.3 5.2 4.3L5 6.5L1.5 7.5Z" fill="#d93025"/></svg>
<!-- camera -->
<div class="a" style="left:541.5px;top:502px;width:37px;height:37px;border-radius:50%;border:1px solid #dadce0;background:#fff"></div>
<svg class="a" style="left:552px;top:514.5px" width="16" height="12" viewBox="0 0 16 12"><rect x="0.8" y="0.8" width="10" height="10.4" rx="1" fill="none" stroke="#5f6368" stroke-width="1.6"/><path d="M10.8 4.5L15.2 1.5V10.5L10.8 7.5Z" fill="#5f6368"/></svg>
<!-- raise hand -->
<svg class="a" style="left:824.5px;top:504px" width="16" height="17" viewBox="0 0 16 17"><path d="M5 9.5V3.2Q5 1.8 6.2 1.8Q7.2 1.8 7.4 2.6Q7.6 0.8 9 0.8Q10.4 0.8 10.5 2.2Q10.8 1.6 11.8 1.6Q13.3 1.6 13.3 3.2V11Q13.3 16 9 16Q6.5 16 5 14L1.2 10.2Q0.6 9.3 1.5 8.7Q2.3 8.2 3.2 8.9L5 10.5" fill="none" stroke="#3c4043" stroke-width="1.3" stroke-linejoin="round"/><path d="M7.4 2.6V8M10.5 2.2V8M11.9 4V8" stroke="#3c4043" stroke-width="0.9"/></svg>
<div class="t" style="left:803.8px;top:523.5px;font-size:9.5px;color:#3c4043">Підняти руку</div>
<svg class="a" style="left:922.5px;top:500px" width="16" height="13" viewBox="0 0 16 13"><rect x="0.8" y="0.8" width="14.4" height="11.2" rx="0.6" fill="none" stroke="#3c4043" stroke-width="1.2"/><path d="M8 9.2V4.4M6 6.3L8 4.3L10 6.3" fill="none" stroke="#3c4043" stroke-width="1.3"/></svg>
<div class="t" style="left:894.4px;top:517.6px;font-size:9.2px;color:#3c4043">Андрій Петранюк</div>
<div class="t" style="left:880px;top:528.8px;font-size:9.2px;color:#3c4043">проводить презентацію</div>
<div class="a" style="left:1002.8px;top:515.5px;width:3px;height:3px;border-radius:50%;background:#3c4043;box-shadow:0 4px 0 #3c4043,0 8px 0 #3c4043"></div>
<div class="a" id="task"></div>
<svg class="a" style="left:10.5px;top:557px" width="11" height="11" viewBox="0 0 11 11"><path d="M0 1.5L4.6 0.8V5.2H0ZM5.4 0.7L11 0V5.2H5.4ZM0 5.8H4.6V10.2L0 9.5ZM5.4 5.8H11V11L5.4 10.3Z" fill="#fff"/></svg>
<div class="a" style="left:32px;top:549px;width:229px;height:27px;background:#f0f0f0"></div>
<svg class="a" style="left:39.5px;top:555px" width="15" height="15" viewBox="0 0 15 15"><circle cx="9" cy="6" r="4.6" fill="none" stroke="#222" stroke-width="1.2"/><path d="M5.7 9.3L1 14" stroke="#222" stroke-width="1.4"/></svg>
<div class="t" style="left:62px;top:558.4px;font-size:9.9px;color:#333">Введіть пошуковий запит тут</div>
<div class="a" style="left:271.8px;top:557px;width:11px;height:11px;border-radius:50%;border:2px solid #e8e8e8"></div>
<svg class="a" style="left:303.5px;top:557px" width="12" height="11" viewBox="0 0 12 11"><rect x="0.6" y="2" width="6" height="7" fill="none" stroke="#ddd" stroke-width="1"/><path d="M0 0.5H7M0 10.5H7M9 0.5V4M9 6V10.5M11.3 0.5V10.5" stroke="#ddd" stroke-width="1"/></svg>
<svg class="a" style="left:335px;top:554px" width="16" height="17" viewBox="0 0 16 17"><path d="M5 4V2.5Q5 1 8 1Q11 1 11 2.5V4" fill="none" stroke="#f0f0f0" stroke-width="1.1"/><rect x="0.5" y="4" width="15" height="12.5" fill="#f0f0f0"/><rect x="4.5" y="7" width="3.2" height="3.2" fill="#f25022"/><rect x="8.3" y="7" width="3.2" height="3.2" fill="#7fba00"/><rect x="4.5" y="10.8" width="3.2" height="3.2" fill="#00a4ef"/><rect x="8.3" y="10.8" width="3.2" height="3.2" fill="#ffb900"/></svg>
<svg class="a" style="left:368px;top:555px" width="16" height="15" viewBox="0 0 16 15"><path d="M4 0.5L8 3L4 5.5L0 3ZM12 0.5L16 3L12 5.5L8 3ZM4 5.5L8 8L4 10.5L0 8ZM12 5.5L16 8L12 10.5L8 8ZM4 11.5L8 9L12 11.5L8 14Z" fill="#fff"/></svg>
<svg class="a" style="left:402px;top:553px" width="12" height="18" viewBox="0 0 12 18"><path d="M9 0L3 7L8 9L2 18L11 9.5L6 7.5Z" fill="#2a9fd8"/><path d="M9 0L3 7L6 7.5Z" fill="#5ac8f0"/></svg>
<svg class="a" style="left:431.5px;top:555px" width="17" height="14" viewBox="0 0 17 14"><path d="M0 4L8.5 0L17 4V14H0Z" fill="#1e78c8"/><path d="M0 4L8.5 9.5L17 4V14H0Z" fill="#3aa0e8"/><path d="M0 14L8.5 8L17 14Z" fill="#5ab8f4"/></svg>
<svg class="a" style="left:464px;top:554.5px" width="16" height="16" viewBox="0 0 16 16"><path d="M8 0.5A7.5 7.2 0 0 1 8 14.9Q6.5 14.9 5.3 14.5L2.5 15.8V13.2A7.2 7.2 0 0 1 8 0.5Z" fill="#1e88f0"/><path d="M3.5 9.5L6.5 6.3L8.5 8L12.5 5.5L9.5 8.8L7.5 7L3.5 9.5Z" fill="#fff"/></svg>
<svg class="a" style="left:496px;top:554px" width="17" height="17" viewBox="0 0 17 17"><rect width="17" height="17" fill="#3b5a9a"/><path d="M9.5 17V10.5H7.5V8H9.5V6Q9.5 3.5 12 3.5H13.5V5.8H12.3Q11.8 5.8 11.8 6.4V8H13.5L13.2 10.5H11.8V17Z" fill="#fff"/></svg>
<svg class="a" style="left:530px;top:556px" width="15" height="12" viewBox="0 0 15 12"><rect width="15" height="12" fill="#f0f0f0"/><path d="M0 0V12H3V4L7.5 7.5L12 4V12H15V0L7.5 5.5Z" fill="#d44638"/></svg>
<svg class="a" style="left:560px;top:553.5px" width="18" height="18" viewBox="0 0 18 18"><path d="M9 0.5A8.5 8.5 0 0 1 17.5 9Q17.5 11 16 11H8Q8 14 11 15.5Q14 16.5 16 15Q13 18 9 17.5A8.5 8.5 0 0 1 9 0.5Z" fill="#1e90d8"/><path d="M4 5Q8 0 14 3Q17 5.5 17.5 9Q12 4 6 7Z" fill="#50c878"/><circle cx="6" cy="13" r="3.5" fill="#ddd"/><circle cx="6" cy="12" r="1.3" fill="#777"/></svg>
<div class="a" style="left:593px;top:554px;width:16.5px;height:16.5px;border-radius:35%;background:#2d8cff"></div>
<svg class="a" style="left:596px;top:559px" width="11" height="7" viewBox="0 0 11 7"><rect x="0" y="0.5" width="7" height="6" rx="1" fill="#fff"/><path d="M7.5 3L11 0.5V6.5L7.5 4Z" fill="#fff"/></svg>
<svg class="a" style="left:625.5px;top:555px" width="16" height="14" viewBox="0 0 16 14"><path d="M0 1H6L7.5 3H16V14H0Z" fill="#e8b030"/><rect x="0" y="5" width="16" height="9" fill="#f8d060"/><rect x="3" y="8" width="10" height="2" fill="#3a8ad0"/></svg>
<svg class="a" style="left:657.5px;top:554.5px" width="17" height="16" viewBox="0 0 17 16"><rect x="4" y="0" width="13" height="16" rx="1" fill="#41a5ee"/><rect x="4" y="5" width="13" height="6" fill="#2b7cd3"/><rect x="4" y="11" width="13" height="5" fill="#185abd"/><rect x="0" y="3.5" width="10" height="9" rx="1" fill="#185abd"/><text x="5" y="11" font-size="7" font-weight="bold" font-family="Liberation Sans" fill="#fff" text-anchor="middle">W</text></svg>
<div class="a" style="left:682.5px;top:549px;width:29px;height:27px;background:#403e3c"></div>
<svg class="a" style="left:690.8px;top:555.2px" width="15" height="15" viewBox="0 0 17 17"><circle cx="8.5" cy="8.5" r="8.2" fill="#db4437"/><path d="M8.5 8.5L1.4 4.4A8.2 8.2 0 0 1 15.6 4.4Z" fill="#db4437"/><path d="M8.5 8.5L15.6 4.4A8.2 8.2 0 0 1 8.5 16.7Z" fill="#fbbc05"/><path d="M8.5 8.5L8.5 16.7A8.2 8.2 0 0 1 1.4 4.4Z" fill="#0f9d58"/><circle cx="8.5" cy="8.5" r="3.9" fill="#fff"/><circle cx="8.5" cy="8.5" r="3" fill="#4285f4"/></svg>
<div class="a" style="left:682.5px;top:574.5px;width:29.5px;height:1.5px;background:#76b9ed"></div>
<div class="a" style="left:556px;top:574.5px;width:25px;height:1.5px;background:#76b9ed"></div>
<div class="a" style="left:620px;top:574.5px;width:25px;height:1.5px;background:#76b9ed"></div>
<div class="a" style="left:652px;top:574.5px;width:27px;height:1.5px;background:#76b9ed"></div>
<div class="a" style="left:717px;top:574.5px;width:27px;height:1.5px;background:#76b9ed"></div>
<svg class="a" style="left:722px;top:553.5px" width="18" height="18" viewBox="0 0 18 18"><path d="M8 0.5Q15 0.5 15.5 7.5Q15.5 13 9 14L6 16.5V14Q1 12.5 1 7Q1.5 0.5 8 0.5Z" fill="#7360f2"/><path d="M5 4Q5.5 3 6.5 3.5L7.5 5Q7.5 6 7 6.5Q8 9 10 10Q10.5 9.5 11.5 9.5L12.5 10.5Q12.5 11.5 11.5 12Q8 12 5 8Q4 5.5 5 4Z" fill="#fff"/></svg>
<div class="a" style="left:729px;top:563px;width:12.5px;height:11px;border-radius:50%;background:#e0342a"></div>
<div class="t" style="left:730.3px;top:565px;font-size:7px;color:#fff">48</div>
<div class="t" style="left:751px;top:552.8px;font-size:7.2px;color:#ddd;font-weight:bold">UK</div>
<div class="a" style="left:770.5px;top:556.3px;width:13px;height:13px;border-radius:50%;background:#2a8ad0;border:1.3px solid #e8f4fc"></div>
<div class="t" style="left:774px;top:557.5px;font-size:9.5px;color:#e8f4fc;font-weight:bold">?</div>
<svg class="a" style="left:790px;top:559px" width="11" height="6" viewBox="0 0 11 6"><path d="M0.5 5.5L5.5 0.8L10.5 5.5" fill="none" stroke="#ddd" stroke-width="1"/></svg>
<svg class="a" style="left:812.5px;top:556px" width="9" height="13" viewBox="0 0 9 13"><rect x="1.5" y="0.5" width="6" height="12" rx="1" fill="none" stroke="#ddd" stroke-width="1"/><path d="M0 4H2M7 4H9M0 9H2M7 9H9" stroke="#ddd"/></svg>
<svg class="a" style="left:832px;top:557px" width="12" height="10" viewBox="0 0 12 10"><path d="M2.5 8.5Q0.5 8.5 0.5 6.5Q0.5 4.5 2.5 4.5Q3 1.5 6 1.5Q9 1.5 9.5 4.5Q11.5 4.5 11.5 6.5Q11.5 8.5 9.5 8.5Z" fill="#bbb"/><path d="M1 1L11 9.5" stroke="#23211e" stroke-width="1.3"/><path d="M1 1L11 9.5" stroke="#ddd" stroke-width="0.7"/></svg>
<svg class="a" style="left:853.5px;top:558px" width="12" height="8" viewBox="0 0 12 8"><rect x="3" y="1.5" width="8.5" height="6" fill="#ddd"/><rect x="0" y="3" width="3" height="3" fill="#ddd"/><path d="M1 0.5H3M2 0V2" stroke="#ddd" stroke-width="0.8"/></svg>
<svg class="a" style="left:874.5px;top:556.5px" width="12" height="11" viewBox="0 0 12 11"><path d="M0.5 3.5H2.5L5.5 0.8V10.2L2.5 7.5H0.5Z" fill="none" stroke="#ddd" stroke-width="0.9"/><path d="M7.5 3.5Q8.5 5.5 7.5 7.5M9.5 2Q11.5 5.5 9.5 9" fill="none" stroke="#999" stroke-width="0.9"/></svg>
<svg class="a" style="left:898.5px;top:556px" width="12" height="13" viewBox="0 0 12 13"><path d="M11 1Q8 0 6 4Q4 8 2 8Q0.5 9 1 11Q2 12.5 4 11Q5 9 8 9Q10 8 10 5" fill="none" stroke="#ddd" stroke-width="1.1"/><path d="M7 2L10.5 5.5" stroke="#ddd" stroke-width="1.1"/></svg>
<div class="t" style="left:923px;top:558.5px;font-size:8px;color:#e8e8e8">УКР</div>
<div class="t" style="left:955.8px;top:552.5px;font-size:8.4px;color:#e8e8e8">16:17</div>
<div class="t" style="left:946.3px;top:564.5px;font-size:8.4px;color:#e8e8e8">23.03.2021</div>
<svg class="a" style="left:995.5px;top:556px" width="18" height="17" viewBox="0 0 18 17"><path d="M0.5 0.5H11.8V9.5H4L1.5 11.5V9.5H0.5Z" fill="#f4f4f4"/><path d="M2.5 3H9.8M2.5 5.2H9.8M2.5 7.4H7" stroke="#555" stroke-width="0.8"/><circle cx="11" cy="11" r="5" fill="#23211e" stroke="#bbb" stroke-width="1"/><text x="11" y="13.8" font-size="8" font-weight="bold" font-family="Liberation Sans" fill="#f4f4f4" text-anchor="middle">2</text></svg>
<div class="a" style="left:1020px;top:549px;width:2px;height:27px;background:#484644"></div>
</body></html>
